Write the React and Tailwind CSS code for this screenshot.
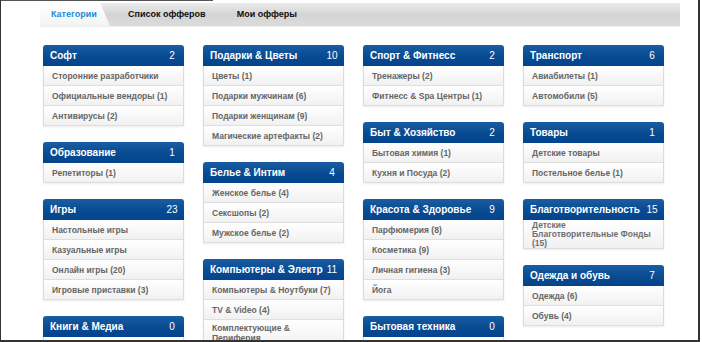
import React from "react";

const columns = [
  [
    { t: "Софт", n: 2, items: ["Сторонние разработчики", "Официальные вендоры (1)", "Антивирусы (2)"] },
    { t: "Образование", n: 1, items: ["Репетиторы (1)"] },
    { t: "Игры", n: 23, items: ["Настольные игры", "Казуальные игры", "Онлайн игры (20)", "Игровые приставки (3)"] },
    { t: "Книги & Медиа", n: 0, items: ["Книги (0)"] },
  ],
  [
    { t: "Подарки & Цветы", n: 10, items: ["Цветы (1)", "Подарки мужчинам (6)", "Подарки женщинам (9)", "Магические артефакты (2)"] },
    { t: "Белье & Интим", n: 4, items: ["Женское белье (4)", "Сексшопы (2)", "Мужское белье (2)"] },
    { t: "Компьютеры & Электроника", n: 11, items: ["Компьютеры & Ноутбуки (7)", "TV & Video (4)", "Комплектующие & Периферия"] },
  ],
  [
    { t: "Спорт & Фитнесс", n: 2, items: ["Тренажеры (2)", "Фитнесс & Spa Центры (1)"] },
    { t: "Быт & Хозяйство", n: 2, items: ["Бытовая химия (1)", "Кухня и Посуда (2)"] },
    { t: "Красота & Здоровье", n: 9, items: ["Парфюмерия (8)", "Косметика (9)", "Личная гигиена (3)", "Йога"] },
    { t: "Бытовая техника", n: 0, items: ["Техника (0)"] },
  ],
  [
    { t: "Транспорт", n: 6, items: ["Авиабилеты (1)", "Автомобили (5)"] },
    { t: "Товары", n: 1, items: ["Детские товары", "Постельное белье (1)"] },
    { t: "Благотворительность", n: 15, items: [["Детские", "Благотворительные Фонды", "(15)"]] },
    { t: "Одежда и обувь", n: 7, items: ["Одежда (6)", "Обувь (4)"] },
  ],
];

function Box({ b }) {
  return (
    <div className="w-[141px] shadow-[0_1px_2px_rgba(0,0,0,0.08)]">
      <div className="h-[21px] rounded-t-[3px] bg-gradient-to-b from-[#1a5da3] via-[#0a4c93] to-[#03448c] flex items-center pl-[7px] pr-[3px] text-white font-bold text-[10px]">
        <div className="flex-1 min-w-0 overflow-hidden whitespace-nowrap">{b.t}</div>
        <div className="w-[18px] shrink-0 text-center font-normal text-[10px]">{b.n}</div>
      </div>
      <div className="border-x border-[#dcdcdc]">
        {b.items.map((it, i) =>
          Array.isArray(it) ? (
            <div
              key={i}
              className="flex flex-col justify-center pl-[8px] pr-[4px] pt-[1px] border-b border-[#dedede] bg-gradient-to-b from-[#ffffff] to-[#f1f1f1] text-[#707070] font-bold text-[8.5px] leading-[9px]"
            >
              {it.map((l, j) => (
                <span key={j} className="whitespace-nowrap">{l}</span>
              ))}
            </div>
          ) : (
            <div
              key={i}
              className="min-h-[20px] flex items-center pl-[8px] pr-[4px] py-[3px] border-b border-[#dedede] bg-gradient-to-b from-[#ffffff] to-[#f1f1f1] text-[#666666] font-bold text-[8.5px] leading-[10px]"
            >
              {it}
            </div>
          )
        )}
      </div>
    </div>
  );
}

export default function App() {
  return (
    <div className="w-[702px] h-[342px] overflow-hidden bg-white" style={{ fontFamily: '"Liberation Sans", Arial, sans-serif' }}>
      <div className="w-[700px] h-[342px] border-l border-r-2 border-b-2 border-[#333333] flex flex-col overflow-hidden">
        <div className="h-[1px] w-[212px] bg-[#555555] shrink-0" />
        <div className="ml-[39px] mr-[18px] mt-[2px] h-[24px] shrink-0 bg-gradient-to-b from-[#ececec] via-[#d4d4d4] to-[#dcdcdc] flex items-stretch border-b border-[#eeeeee]">
          <div
            className="w-[70px] bg-gradient-to-b from-white to-[#f4f4f4] flex items-center pl-[11px] text-[#1a8ad8] font-bold text-[9px]"
            style={{ clipPath: "polygon(0 0, 86% 0, 100% 100%, 0 100%)" }}
          >
            Категории
          </div>
          <div className="ml-[18px] flex items-center text-[#111111] font-bold text-[9px]">Список офферов</div>
          <div className="ml-[31px] flex items-center text-[#111111] font-bold text-[9px]">Мои офферы</div>
        </div>
        <div className="ml-[42px] mt-[18px] flex items-start gap-[19px]">
          {columns.map((col, ci) => (
            <div key={ci} className="flex flex-col gap-[16px]">
              {col.map((b, bi) => (
                <Box key={bi} b={b} />
              ))}
            </div>
          ))}
        </div>
      </div>
    </div>
  );
}
